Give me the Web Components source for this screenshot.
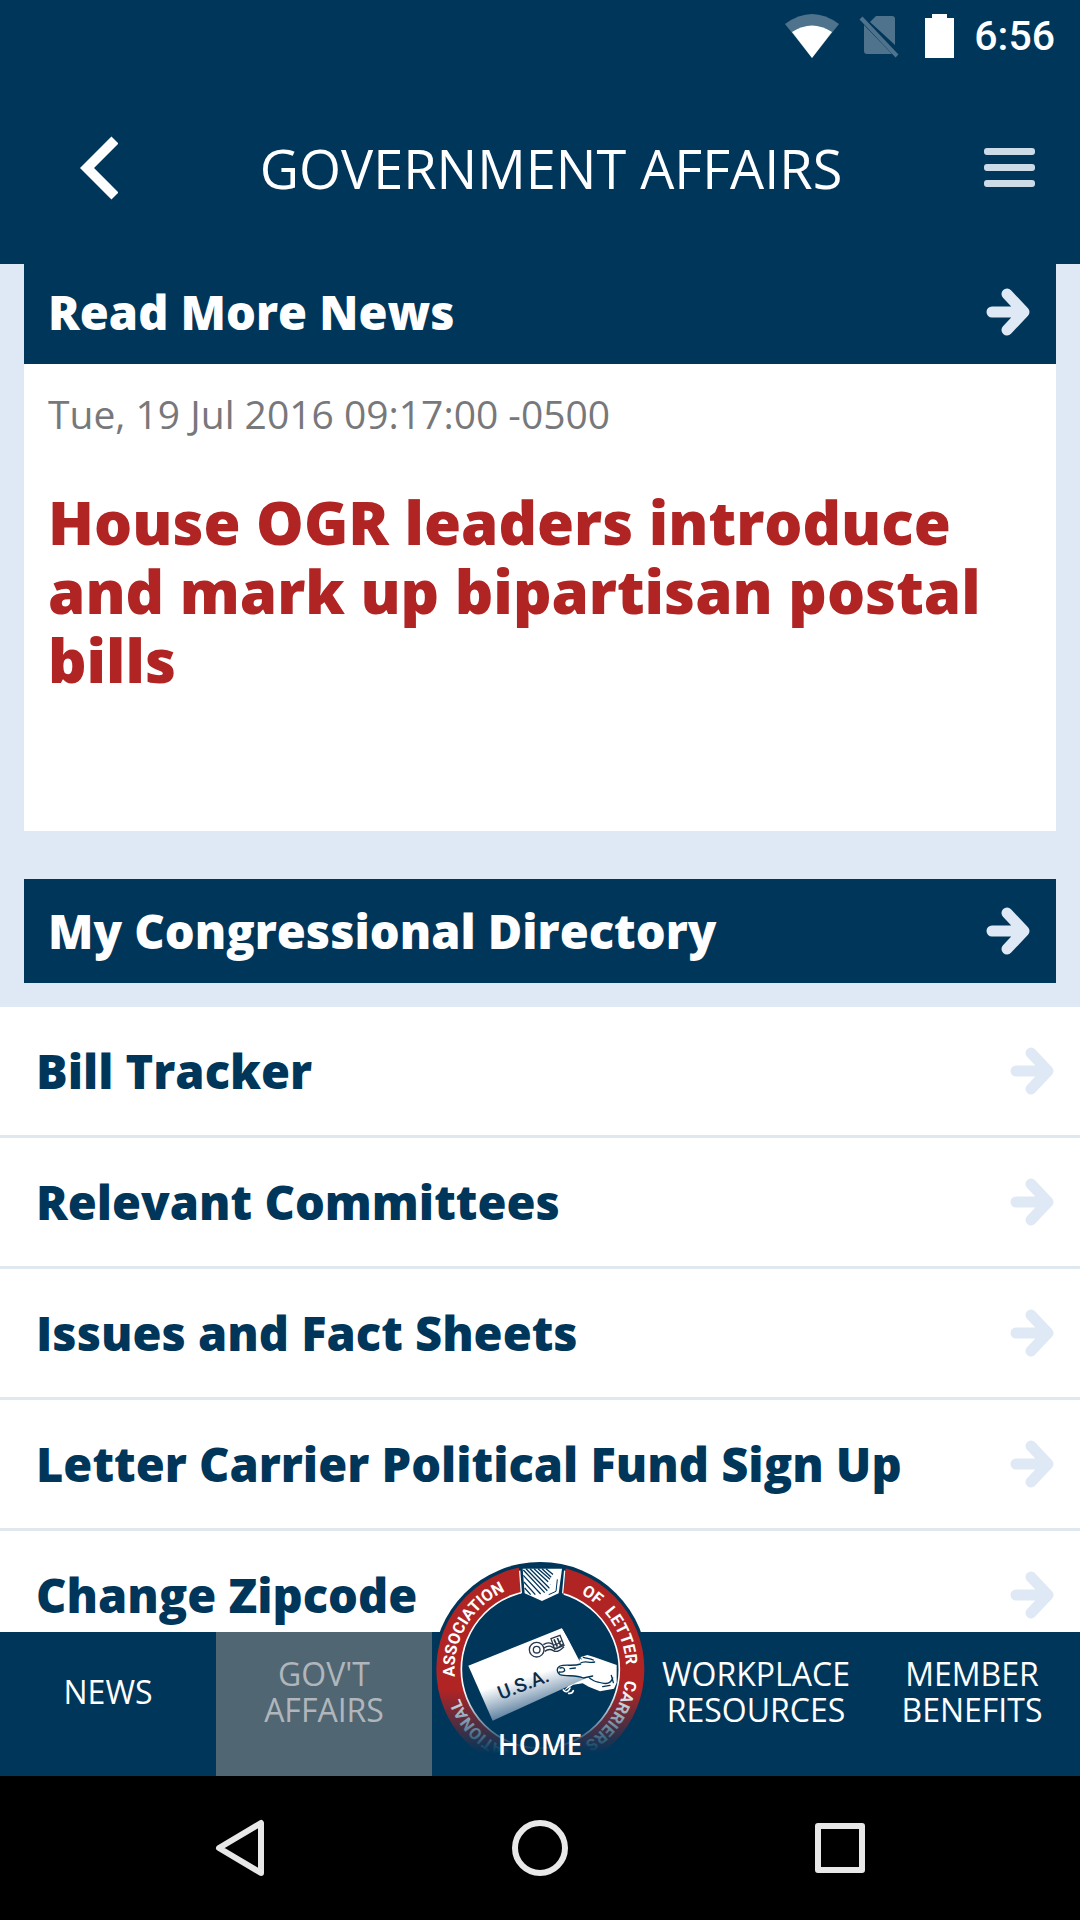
<!DOCTYPE html>
<html lang="en">
<head>
  <meta charset="utf-8">
  <meta name="viewport" content="width=device-width, initial-scale=1">
  <title>Government Affairs</title>
  <style>
    :root {
      --navy: #00365a;
      --pale: #dfe9f5;
      --red: #b02424;
      --date: #77787b;
      --font-body: "Open Sans", "Noto Sans", sans-serif;
    }

    body {
      margin: 0;
      font-family: var(--font-body);
    }
  </style>
</head>
<body>

<nalc-app>
  <nalc-status-bar slot="top" time="6:56"></nalc-status-bar>
  <nalc-header slot="top">Government Affairs</nalc-header>

  <nalc-card>
    <nalc-card-link slot="heading">Read More News</nalc-card-link>
    <nalc-article date="Tue, 19 Jul 2016 09:17:00 -0500">House OGR leaders introduce and mark up bipartisan postal bills</nalc-article>
  </nalc-card>
  <nalc-card>
    <nalc-card-link slot="heading">My Congressional Directory</nalc-card-link>
  </nalc-card>
  <nalc-menu>
    <nalc-menu-item>Bill Tracker</nalc-menu-item>
    <nalc-menu-item>Relevant Committees</nalc-menu-item>
    <nalc-menu-item>Issues and Fact Sheets</nalc-menu-item>
    <nalc-menu-item>Letter Carrier Political Fund Sign Up</nalc-menu-item>
    <nalc-menu-item>Change Zipcode</nalc-menu-item>
  </nalc-menu>

  <nalc-tab-bar slot="bottom">
    <nalc-tab>News</nalc-tab>
    <nalc-tab active>Gov't<br>Affairs</nalc-tab>
    <nalc-home-tab>Home</nalc-home-tab>
    <nalc-tab>Workplace<br>Resources</nalc-tab>
    <nalc-tab>Member<br>Benefits</nalc-tab>
  </nalc-tab-bar>
  <nalc-system-nav slot="bottom"></nalc-system-nav>
</nalc-app>

<script>

  /**
   *
   * NalcElement
   *  - Description: base class, renders the static template of the subclass
   *
   */
  class NalcElement extends HTMLElement {

    /**
     * @type {string}
     */
    static TEMPLATE = '<slot></slot>';

    constructor() {
      super();

      const template = document.createElement('template');
      template.innerHTML = this.constructor.TEMPLATE;
      this.attachShadow({mode: 'open'}).append(template.content.cloneNode(true));
    }

  }

  // ARROW USED BY CARD LINKS AND MENU ITEMS //
  const ARROW = `
    <svg class="arrow" width="46" height="50" viewBox="0 0 46 50" aria-hidden="true">
      <path d="M6 25H36M21 7L38 25L21 43" fill="none" stroke="currentColor" stroke-width="11" stroke-linecap="round" stroke-linejoin="round"/>
    </svg>
  `;

  class App extends NalcElement {
    static TEMPLATE = `
      <style>
        :host {
          display: flex;
          flex-direction: column;
          height: 100vh;
          background: var(--pale);
        }
        .bar {
          position: relative;
          z-index: 1;
          flex-shrink: 0;
        }
        main {
          flex: 1;
          min-height: 0;
          overflow: hidden;
        }
        .content {
          margin-top: -4px;
        }
      </style>
      <div class="bar"><slot name="top"></slot></div>
      <main><div class="content"><slot></slot></div></main>
      <div class="bar"><slot name="bottom"></slot></div>
    `;
  }

  class StatusBar extends NalcElement {
    static TEMPLATE = `
      <style>
        :host {
          display: flex;
          align-items: center;
          justify-content: flex-end;
          gap: 20px;
          height: 72px;
          padding-right: 25px;
          background: var(--navy);
          color: #fff;
          font: 500 41px/48px Roboto, sans-serif;
        }
      </style>
      <svg width="54" height="44" viewBox="0 0 54 44" aria-hidden="true">
        <path d="M0 10Q27 -10 54 10L27 44Z" fill="#4f738c"/>
        <path d="M7 18Q27 5 47 18L27 44Z" fill="#fff"/>
      </svg>
      <svg width="46" height="44" viewBox="0 0 46 44" fill="#4f738c" aria-hidden="true">
        <path d="M11 8L17 2H33Q36 2 36 5V31Z"/>
        <path d="M5 11L33 40H8Q5 40 5 37Z"/>
        <path d="M2 4L38 42" stroke="#4f738c" stroke-width="4"/>
      </svg>
      <svg width="29" height="44" viewBox="0 0 29 44" fill="#fff" aria-hidden="true">
        <path d="M7 0H22V4H29V44H0V4H7Z"/>
      </svg>
      <time></time>
    `;

    connectedCallback() {
      this.shadowRoot.querySelector('time').textContent = this.getAttribute('time');
    }
  }

  class Header extends NalcElement {
    static TEMPLATE = `
      <style>
        :host {
          display: flex;
          align-items: center;
          height: 192px;
          padding: 0 44px 0 80px;
          background: var(--navy);
          color: #fff;
        }
        button {
          display: flex;
          padding: 0;
          border: 0;
          background: none;
          color: inherit;
        }
        h1 {
          flex: 1;
          margin: 0;
          font-size: 54px;
          font-weight: 500;
          line-height: 70px;
          text-align: center;
          text-transform: uppercase;
        }
      </style>
      <button type="button" aria-label="Back">
        <svg width="38" height="64" viewBox="0 0 38 64" aria-hidden="true">
          <path d="M35 4L7 32L35 60" fill="none" stroke="currentColor" stroke-width="10"/>
        </svg>
      </button>
      <h1><slot></slot></h1>
      <button type="button" aria-label="Menu">
        <svg width="52" height="40" viewBox="0 0 52 40" fill="#cddae7" aria-hidden="true">
          <rect width="51" height="7" rx="3"/>
          <rect y="16" width="51" height="7" rx="3"/>
          <rect y="32" width="51" height="7" rx="3"/>
        </svg>
      </button>
    `;
  }

  class Card extends NalcElement {
    static TEMPLATE = `
      <style>
        :host {
          display: block;
          margin: 0 24px 48px;
          background: #fff;
        }
        :host(:last-of-type) {
          margin-bottom: 24px;
        }
      </style>
      <slot name="heading"></slot>
      <slot></slot>
    `;
  }

  class CardLink extends NalcElement {
    static TEMPLATE = `
      <style>
        :host {
          display: block;
        }
        a {
          display: flex;
          align-items: center;
          justify-content: space-between;
          min-height: 104px;
          padding: 0 24px;
          background: var(--navy);
          color: #fff;
          font-size: 47px;
          font-weight: 800;
          line-height: 64px;
          text-decoration: none;
        }
        .arrow {
          color: var(--pale);
        }
      </style>
      <a href="#"><slot></slot>${ ARROW }</a>
    `;
  }

  class Article extends NalcElement {
    static TEMPLATE = `
      <style>
        :host {
          display: block;
          padding: 24px 24px 136px;
        }
        time {
          display: block;
          color: var(--date);
          font-size: 39px;
          line-height: 52px;
        }
        h2 {
          margin: 48px 0 0;
          color: var(--red);
          font-size: 60px;
          font-weight: 800;
          line-height: 69px;
        }
      </style>
      <time></time>
      <h2><slot></slot></h2>
    `;

    connectedCallback() {
      this.shadowRoot.querySelector('time').textContent = this.getAttribute('date');
    }
  }

  class Menu extends NalcElement {
    static TEMPLATE = `
      <style>
        :host {
          display: block;
          background: #fff;
        }
      </style>
      <nav><slot></slot></nav>
    `;
  }

  class MenuItem extends NalcElement {
    static TEMPLATE = `
      <style>
        :host {
          display: block;
          border-bottom: 3px solid #e0e8ef;
        }
        a {
          display: flex;
          align-items: center;
          justify-content: space-between;
          min-height: 128px;
          padding: 0 24px 0 36px;
          color: var(--navy);
          font-size: 47px;
          font-weight: 800;
          line-height: 64px;
          text-decoration: none;
        }
        .arrow {
          color: var(--pale);
        }
      </style>
      <a href="#"><slot></slot>${ ARROW }</a>
    `;
  }

  class TabBar extends NalcElement {
    static TEMPLATE = `
      <style>
        :host {
          display: block;
          background: var(--navy);
        }
        nav {
          display: grid;
          grid-template-columns: repeat(5, 1fr);
          height: 144px;
        }
      </style>
      <nav><slot></slot></nav>
    `;
  }

  class Tab extends NalcElement {
    static TEMPLATE = `
      <style>
        :host {
          display: flex;
          color: #fff;
        }
        :host([active]) {
          background: #506673;
          color: #b0b6bb;
        }
        a {
          flex: 1;
          display: flex;
          align-items: center;
          justify-content: center;
          padding-bottom: 24px;
          color: inherit;
          font-size: 32px;
          font-weight: 500;
          line-height: 36px;
          text-align: center;
          text-decoration: none;
          text-transform: uppercase;
        }
      </style>
      <a href="#"><span><slot></slot></span></a>
    `;
  }

  /**
   * Middle tab: the round seal rises above the tab bar, its lower part
   * fades into the bar behind the label.
   */
  class HomeTab extends NalcElement {
    static TEMPLATE = `
      <style>
        :host {
          display: flex;
          color: #fff;
        }
        a {
          position: relative;
          flex: 1;
          display: flex;
          align-items: flex-end;
          justify-content: center;
          padding-bottom: 14px;
          color: inherit;
          font-size: 28px;
          font-weight: 600;
          line-height: 36px;
          text-decoration: none;
          text-transform: uppercase;
        }
        svg {
          position: absolute;
          bottom: 0;
          left: 50%;
          margin-left: -108px;
        }
        span {
          position: relative;
        }
        .ring-text {
          fill: #fff;
          font: 700 49px Roboto, sans-serif;
        }
      </style>
      <a href="#">
        <svg width="216" height="216" viewBox="36 30 648 648" aria-hidden="true">
          <defs>
            <linearGradient id="fade" gradientUnits="userSpaceOnUse" x1="0" y1="420" x2="0" y2="610">
              <stop offset="0" stop-color="#00365a" stop-opacity="0"/>
              <stop offset="1" stop-color="#00365a"/>
            </linearGradient>
            <linearGradient id="paper" gradientUnits="userSpaceOnUse" x1="320" y1="380" x2="350" y2="480">
              <stop offset="0" stop-color="#fff"/>
              <stop offset="1" stop-color="#54799a"/>
            </linearGradient>
            <path id="baseline" d="M361 615A257 257 0 0 1 361 101A257 257 0 0 1 361 615"/>
          </defs>

          <circle cx="361" cy="358" r="322" fill="#00365a"/>
          <circle cx="361" cy="358" r="275" fill="none" stroke="#b02424" stroke-width="74"/>
          <circle cx="361" cy="358" r="237" fill="none" stroke="#fff" stroke-width="5"/>

          <text class="ring-text" text-anchor="end"><textPath href="#baseline" startOffset="315">NATIONAL</textPath></text>
          <text class="ring-text" text-anchor="middle"><textPath href="#baseline" startOffset="540">ASSOCIATION</textPath></text>
          <text class="ring-text" text-anchor="middle"><textPath href="#baseline" startOffset="964">OF</textPath></text>
          <text class="ring-text" text-anchor="middle"><textPath href="#baseline" startOffset="1110">LETTER</textPath></text>
          <text class="ring-text"><textPath href="#baseline" startOffset="1243">CARRIERS</textPath></text>
          <path d="M36 400H686V678H36Z" fill="url(#fade)"/>

          <!-- cuff at the top of the ring -->
          <path d="M296 46H438L430 140L366 164L304 140Z" fill="#00365a"/>
          <path d="M299 62L304 130M434 62L428 130" stroke="#fff" stroke-width="4"/>
          <path d="M308 56H426L416 130L366 153L314 130Z" fill="#fff"/>
          <path d="M310 60L374 128M318 56L382 122M330 56L390 116M342 56L398 108M354 56L404 100M366 56L396 84M378 56L400 74M310 76L362 132M312 96L346 134M314 114L332 134" stroke="#00365a" stroke-width="4"/>
          <path d="M404 66L382 100L392 104L384 126L414 104L420 62Z" fill="#fff"/>
          <path d="M412 88L408 124L386 134" fill="none" stroke="#00365a" stroke-width="3"/>

          <!-- hand -->
          <path d="M480 322L502 315L522 321L590 345V398L582 416L540 424L506 410L488 400L460 404L430 424L470 380Z" fill="#fff"/>
          <path d="M480 340C494 330 506 340 524 336M490 322C500 326 510 324 520 330M500 374C512 392 528 396 552 400C566 402 574 396 578 384M574 376L580 398M548 410L570 406" fill="none" stroke="#00365a" stroke-width="4" stroke-linecap="round"/>

          <!-- envelope -->
          <path d="M145 347L427 234L504 382L218 512Z" fill="url(#paper)"/>
          <path d="M427 234L484 328" stroke="#00365a" stroke-width="3"/>
          <g fill="none" stroke="#26384c" stroke-width="4">
            <circle cx="350" cy="299" r="22"/>
            <circle cx="350" cy="299" r="10"/>
            <path d="M370 284Q384 274 396 282T424 272M372 294Q386 284 398 292T428 282M374 304Q388 294 400 302T432 290M393 266L420 256L432 286L404 298Z"/>
            <path d="M402 268L412 290M412 264L422 286" stroke-width="5"/>
          </g>
          <text transform="translate(242 450) rotate(-21)" fill="#0d2c48" font-family="Roboto, sans-serif" font-weight="500" font-size="58">U.S.A.</text>

          <!-- thumb and fingertips -->
          <path d="M420 348C436 340 460 350 482 340L520 350L510 382L494 384C470 372 440 382 420 374C408 366 410 354 420 348Z" fill="#fff"/>
          <path d="M482 342C460 350 436 342 420 348C408 354 410 368 420 374C440 380 468 374 490 384L518 378M420 354Q434 350 434 362Q428 368 418 366M450 356L466 354" fill="none" stroke="#00365a" stroke-width="4" stroke-linecap="round"/>
          <path d="M430 420C438 430 446 424 450 414M446 430Q456 432 460 422" fill="none" stroke="#fff" stroke-width="5" stroke-linecap="round"/>
        </svg>
        <span><slot></slot></span>
      </a>
    `;
  }

  class SystemNav extends NalcElement {
    static TEMPLATE = `
      <style>
        :host {
          display: grid;
          grid-template-columns: repeat(3, 300px);
          justify-content: center;
          height: 144px;
          background: #000;
          color: #e8e8e8;
        }
        button {
          display: flex;
          align-items: center;
          justify-content: center;
          padding: 0;
          border: 0;
          background: none;
          color: inherit;
        }
        svg {
          fill: none;
          stroke: currentColor;
          stroke-width: 6;
          stroke-linejoin: round;
        }
      </style>
      <button type="button" aria-label="Back">
        <svg width="60" height="60" viewBox="0 0 60 60"><path d="M51 5V55L9 30Z"/></svg>
      </button>
      <button type="button" aria-label="Home">
        <svg width="60" height="60" viewBox="0 0 60 60"><circle cx="30" cy="30" r="25"/></svg>
      </button>
      <button type="button" aria-label="Recent apps">
        <svg width="60" height="60" viewBox="0 0 60 60"><rect x="8" y="8" width="44" height="44"/></svg>
      </button>
    `;
  }

  customElements.define('nalc-app', App);
  customElements.define('nalc-status-bar', StatusBar);
  customElements.define('nalc-header', Header);
  customElements.define('nalc-card', Card);
  customElements.define('nalc-card-link', CardLink);
  customElements.define('nalc-article', Article);
  customElements.define('nalc-menu', Menu);
  customElements.define('nalc-menu-item', MenuItem);
  customElements.define('nalc-tab-bar', TabBar);
  customElements.define('nalc-tab', Tab);
  customElements.define('nalc-home-tab', HomeTab);
  customElements.define('nalc-system-nav', SystemNav);

</script>
</body>
</html>
